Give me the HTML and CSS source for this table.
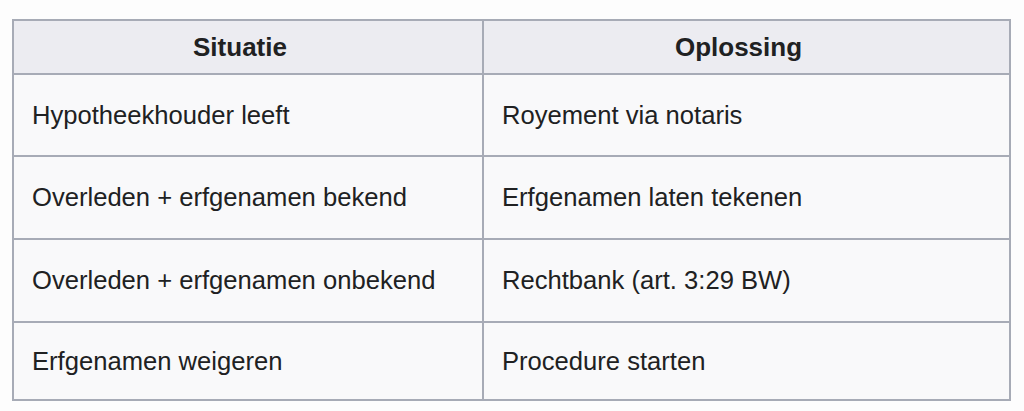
FILE: index.html
```html
<!DOCTYPE html>
<html lang="nl">
<head>
<meta charset="utf-8">
<title>Situatie en oplossing</title>
<link rel="stylesheet" href="styles.css">
</head>
<body>
<table class="wikitable">
  <colgroup>
    <col class="col-situatie">
    <col class="col-oplossing">
  </colgroup>
  <thead>
    <tr class="head-row">
      <th>Situatie</th>
      <th>Oplossing</th>
    </tr>
  </thead>
  <tbody>
    <tr class="row row-a">
      <td>Hypotheekhouder leeft</td>
      <td>Royement via notaris</td>
    </tr>
    <tr class="row row-b">
      <td>Overleden + erfgenamen bekend</td>
      <td>Erfgenamen laten tekenen</td>
    </tr>
    <tr class="row row-b">
      <td>Overleden + erfgenamen onbekend</td>
      <td>Rechtbank (art. 3:29 BW)</td>
    </tr>
    <tr class="row row-last">
      <td>Erfgenamen weigeren</td>
      <td>Procedure starten</td>
    </tr>
  </tbody>
</table>
</body>
</html>
```

FILE: styles.css
```css
html, body {
  margin: 0;
  padding: 0;
  background: #fdfdfd;
}

body {
  font-family: "Liberation Sans", Arial, Helvetica, sans-serif;
  color: #202122;
}

.wikitable {
  margin: 19px 0 0 12px;
  width: 999px;
  table-layout: fixed;
  border-collapse: collapse;
  border: 2px solid #a7abb6;
  background: #f9f9fa;
  font-size: 25.6px;
}

.col-situatie { width: 470px; }
.col-oplossing { width: 527px; }

.wikitable th,
.wikitable td {
  border: 2px solid #a7abb6;
  padding: 0 18px;
  vertical-align: middle;
}

.wikitable th {
  background: #ececf1;
  font-weight: bold;
  font-size: 26px;
  text-align: center;
  padding-right: 34px;
}

.head-row th { height: 52px; }
.row-a td { height: 80px; }
.row-b td { height: 81px; }
.row-last td { height: 76px; }

.wikitable td {
  text-align: left;
}
```
